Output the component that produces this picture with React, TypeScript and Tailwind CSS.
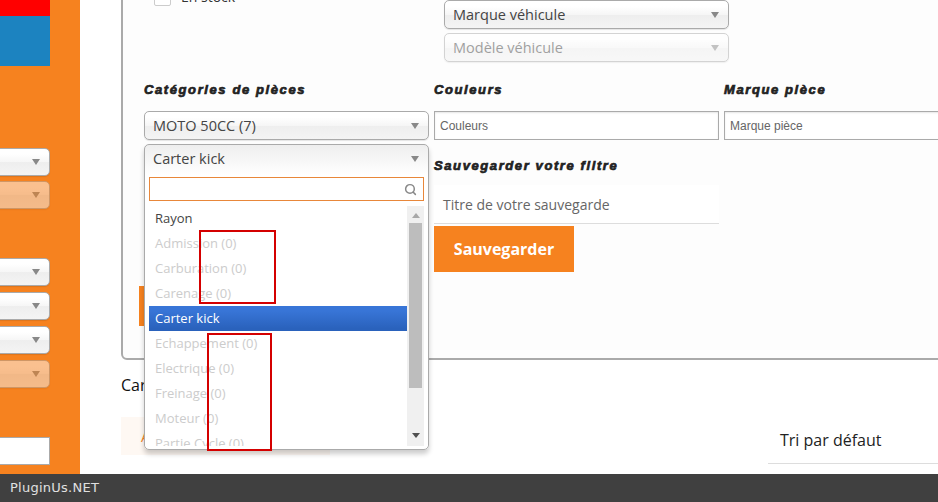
import { Search } from 'lucide-react'

const items = ['Admission (0)', 'Carburation (0)', 'Carenage (0)']
const itemsAfter = ['Echappement (0)', 'Electrique (0)', 'Freinage (0)', 'Moteur (0)', 'Partie Cycle (0)']

function Arrow({ className = 'fill-[#888]' }: { className?: string }) {
  return (
    <svg width="8" height="6" viewBox="0 0 8 6" className={className}>
      <polygon points="0,0 8,0 4,6" />
    </svg>
  )
}

function Select({ label, muted = false }: { label: string; muted?: boolean }) {
  return (
    <div
      className={`flex h-[29px] items-center justify-between rounded-[5px] border border-[#aaa] bg-[linear-gradient(#fff_20%,#f6f6f6_50%,#eee_52%,#f4f4f4_100%)] pl-[8px] pr-[9px] font-['Open_Sans',sans-serif] text-[14.5px] text-[#444] shadow-[0_1px_1px_rgba(0,0,0,0.1)] ${muted ? 'opacity-50' : ''}`}
    >
      <span>{label}</span>
      <Arrow />
    </div>
  )
}

function SideSelect({ muted = false }: { muted?: boolean }) {
  return (
    <div
      className={`-ml-[10px] flex h-[28px] items-center justify-end rounded-[5px] border border-[#aaa] bg-[linear-gradient(#fff_20%,#f6f6f6_50%,#eee_52%,#f4f4f4_100%)] pr-[9px] shadow-[0_1px_1px_rgba(0,0,0,0.1)] ${muted ? 'opacity-50' : ''}`}
    >
      <Arrow />
    </div>
  )
}

function Title({ children }: { children: string }) {
  return (
    <h4 className="h-[20px] font-['Liberation_Sans',sans-serif] text-[13px] font-bold italic leading-[20px] tracking-[1.6px] text-[#222] [-webkit-text-stroke:0.7px_#222]">
      {children}
    </h4>
  )
}

function TextBox({ label }: { label: string }) {
  return (
    <div className="flex h-[29px] items-center border border-[#aaa] bg-white pl-[5px] font-['Liberation_Sans',sans-serif] text-[12px] text-[#666] shadow-[inset_0_1px_2px_rgba(0,0,0,0.1)]">
      {label}
    </div>
  )
}

function Dropdown() {
  return (
    <div className="absolute left-0 right-0 top-[64px] z-10 h-[306px] rounded-[5px] border border-[#aaa] bg-[linear-gradient(#eee,#fff_30px)] font-['Open_Sans',sans-serif] text-[13px] shadow-[0_4px_5px_rgba(0,0,0,0.2)]">
      <div className="flex h-[27px] items-center justify-between pl-[8px] pr-[9px] text-[14.5px] text-[#444]">
        <span>Carter kick</span>
        <Arrow />
      </div>
      <div className="bg-white px-[4px]">
        <div className="relative mt-[5px] h-[24px] border border-[#e8873a] bg-white">
          <Search size={13} strokeWidth={2.75} className="absolute right-[6px] top-[5px] text-[#888]" />
        </div>
        <div className="mt-[5px] flex h-[240px] overflow-hidden">
          <ul className="flex-1">
            <li className="flex h-[25px] items-center pl-[6px] text-[#444]">Rayon</li>
            {items.map((item) => (
              <li key={item} className="flex h-[25px] items-center pl-[6px] text-[#ccc]">{item}</li>
            ))}
            <li className="flex h-[25px] items-center bg-[linear-gradient(#3875d7_20%,#2a62bc_90%)] pl-[6px] text-white">Carter kick</li>
            {itemsAfter.map((item) => (
              <li key={item} className="flex h-[25px] shrink-0 items-center pl-[6px] text-[#ccc]">{item}</li>
            ))}
          </ul>
          <div className="flex w-[17px] flex-col items-center bg-[#f0f0f0]">
            <svg width="8" height="5" viewBox="0 0 8 5" className="mt-[7px] fill-[#a8a8a8]">
              <polygon points="0,5 8,5 4,0" />
            </svg>
            <div className="mt-[5px] h-[165px] w-[13px] bg-[#bdbdbd]" />
            <svg width="8" height="5" viewBox="0 0 8 5" className="mt-[45px] fill-[#505050]">
              <polygon points="0,0 8,0 4,5" />
            </svg>
          </div>
        </div>
      </div>
      {/* red annotation boxes drawn over the list */}
      <div className="absolute left-[54px] top-[85px] h-[74px] w-[77px] border-2 border-[#d40000]" />
      <div className="absolute left-[62px] top-[188px] h-[118px] w-[65px] border-2 border-[#d40000]" />
    </div>
  )
}

export default function App() {
  return (
    <div className="flex h-[502px] w-[938px] flex-col overflow-hidden bg-white">
      <div className="flex min-h-0 flex-1">
        <aside className="w-[80px] shrink-0 overflow-hidden bg-[#f6821f] pr-[30px]">
          <div className="h-[16px] bg-[#ff0000]" />
          <div className="h-[50px] bg-[#1c83c0]" />
          <div className="mt-[82px] flex flex-col gap-[5px]">
            <SideSelect />
            <SideSelect muted />
          </div>
          <div className="mt-[49px] flex flex-col gap-[6px]">
            <SideSelect />
            <SideSelect />
            <SideSelect />
            <SideSelect muted />
          </div>
          <div className="-ml-[10px] mt-[49px] h-[28px] border border-[#aaa] bg-white" />
        </aside>

        <main className="min-w-0 flex-1 overflow-hidden pl-[41px]">
          <section className="-mt-[40px] h-[400px] w-[900px] rounded-[6px] border-2 border-[#aaa] bg-[#fdfdfd] pl-[21px] pt-[28px]">
            <div className="grid grid-cols-[285px_285px] gap-x-[15px]">
              <label className="flex h-[16px] items-start gap-[10px] pl-[10px] font-['Open_Sans',sans-serif] text-[14px] leading-[16px] text-[#333]">
                <span className="h-[16px] w-[17px] shrink-0 rounded-[2px] border border-[#ccc] bg-white" />
                <span className="-mt-[1px]">En stock</span>
              </label>
              <div className="mt-[10px] flex flex-col gap-[4px]">
                <Select label="Marque véhicule" />
                <Select label="Modèle véhicule" muted />
              </div>
            </div>

            <div className="mt-[18px] grid grid-cols-[285px_285px_285px] gap-x-[5px]">
              <div className="relative">
                <Title>Catégories de pièces</Title>
                <div className="mt-[11px] flex flex-col gap-[4px]">
                  <Select label="MOTO 50CC (7)" />
                  <div className="h-[29px]" />
                </div>
                <Dropdown />
                <div className="-ml-[5px] mt-[113px] h-[40px] w-[140px] bg-[#f6821f]" />
              </div>
              <div>
                <Title>Couleurs</Title>
                <div className="mt-[11px]">
                  <TextBox label="Couleurs" />
                </div>
                <div className="mt-[16px]">
                  <Title>Sauvegarder votre filtre</Title>
                </div>
                <div className="mt-[9px] flex h-[39px] items-center border-b border-[#ddd] bg-white pl-[9px] font-['Open_Sans',sans-serif] text-[14px] text-[#666]">
                  Titre de votre sauvegarde
                </div>
                <button className="mt-[2px] h-[46px] w-[140px] bg-[#f6821f] font-['Open_Sans',sans-serif] text-[16px] font-bold text-white">
                  Sauvegarder
                </button>
              </div>
              <div>
                <Title>Marque pièce</Title>
                <div className="mt-[11px]">
                  <TextBox label="Marque pièce" />
                </div>
              </div>
            </div>
          </section>

          <p className="mt-[14px] h-[22px] font-['Open_Sans',sans-serif] text-[16px] leading-[22px] text-[#111]">Car</p>
          <div className="mt-[21px] flex items-start justify-between">
            <div className="flex h-[38px] w-[209px] items-center bg-[#fef8f3] pl-[20px] font-['Open_Sans',sans-serif] text-[14px] text-[#f6821f]">
              A
            </div>
            <div className="h-[47px] w-[170px] border-b border-[#ddd] pl-[12px] pt-[11px] font-['Open_Sans',sans-serif] text-[16px] text-[#222]">
              Tri par défaut
            </div>
          </div>
        </main>
      </div>

      <footer className="flex h-[28px] shrink-0 items-center bg-[#404040] pl-[10px] font-['DejaVu_Sans',sans-serif] text-[13px] tracking-[0.25px] text-[#e0e0e0]">
        PluginUs.NET
      </footer>
    </div>
  )
}
